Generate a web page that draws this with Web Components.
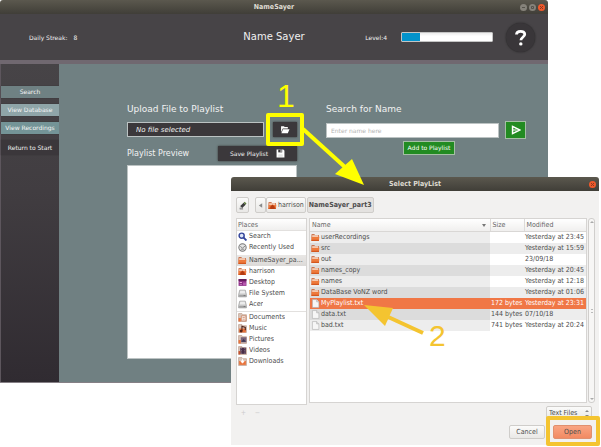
<!DOCTYPE html>
<html lang="en">
<head>
<meta charset="utf-8">
<title>NameSayer</title>
<style>
  html, body { margin: 0; background: #fff; }
  body { position: relative; display: grid; grid-template-columns: 100%; align-items: start;
    min-height: 100vh; font-family: "DejaVu Sans", sans-serif; }
  app-window, file-dialog { grid-area: 1 / 1; }
</style>
</head>
<body>
<app-window></app-window>
<file-dialog></file-dialog>
<guide-notes></guide-notes>

<script>
const define = (name, html, setup) => {
  const tpl = document.createElement('template');
  tpl.innerHTML = html;
  customElements.define(name, class extends HTMLElement {
    constructor() {
      super();
      this.attachShadow({ mode: 'open' }).append(tpl.content.cloneNode(true));
    }
    connectedCallback() { if (setup) setup(this, this.shadowRoot); }
  });
};

const folder = `<path d="M1 2h5l1 1.5h7V14H1z" fill="#c2501f"/><path d="M2 4h11v4H2z" fill="#f8e3d3"/><path d="M1 6.500h14L14 14H1z" fill="#ee7a3c"/><path d="M1 12h13.300l-.3 2H1z" fill="#d4571f"/>`;
const drive = `<path d="M3 2h10l2 8v4H1v-4z" fill="#c9c9c9" stroke="#8d8d8d"/><path d="M4 3h8l1 5H3z" fill="#ececec"/><path d="M2 10.500h12v3H2z" fill="#a2a2a2"/><path d="M10 11.500h3v1h-3z" fill="#555"/>`;
const special = inner => `<path d="M1 1h6l1 2h7v12H1z" fill="#d8c6bb" stroke="#b58f7c"/>${inner}`;
const ICONS = {
  folder,
  home: `${folder}<path d="M4 10l4-4 4 4v4H4z" fill="#b63c12"/>`,
  search: `<circle cx="6.500" cy="6.500" r="4.500" fill="#dfe6f7" stroke="#36479c" stroke-width="2.600"/><path d="M10 10l5 5" stroke="#36479c" stroke-width="3.400"/>`,
  recent: `<circle cx="8" cy="8" r="6.500" fill="#e4e4e4" stroke="#777" stroke-width="1.800"/><path d="M4 6l4 3 5-4M5 11h6" fill="none" stroke="#777" stroke-width="1.500"/>`,
  desktop: `<path d="M1 2h14v12H1z" fill="#8d2f86"/><path d="M1 2h14v3H1z" fill="#5d1d55"/><path d="M3 7h4v2H3zM3 11h4v1H3z" fill="#e7a9d5"/><path d="M9 8h5v5H9z" fill="#b85bb0"/>`,
  drive,
  documents: special('<path d="M6 5h8v9H6z" fill="#f7f1ee" stroke="#c0663c"/><path d="M8 8h4M8 11h4" stroke="#c0663c"/><path d="M1 9h4v6H1z" fill="#e8733b"/>'),
  music: special('<path d="M2 8h12v7H2z" fill="#e8733b"/><path d="M7 13V4l6 2v5" fill="none" stroke="#53261a" stroke-width="2"/><circle cx="5.500" cy="12.500" r="2.500" fill="#53261a"/>'),
  pictures: special('<path d="M5 4h10v9H5z" fill="#746279"/><path d="M6 12l4-5 4 5z" fill="#3c3550"/><path d="M1 9h4v6H1z" fill="#e8733b"/>'),
  videos: special('<path d="M4 3h10v11H4z" fill="#4a2f49"/><path d="M6 4v10M12 4v10" stroke="#c9b7c7" stroke-dasharray="1.500 1.500"/><path d="M1 9h3v6H1z" fill="#c54f2b"/>'),
  downloads: special('<path d="M2 7h12v7H2z" fill="#e8733b"/><path d="M8 3v6M5 7l3 4 3-4z" stroke="#fff" fill="#fff" stroke-width="1.500"/>'),
  file: `<path d="M2.500 1h7.500l4 4v10h-11.500z" fill="#f6f6f6" stroke="#aaa"/><path d="M10 1v4h4" fill="#ddd" stroke="#aaa"/>`,
  pencil: `<path d="M2 14l2-5 4 3z" fill="#c9c9c9"/><path d="M4 9l6-6 3.500 3.500-6 6z" fill="#3c3c3c"/><path d="M10 3l2-1.500 3 3-1.500 2z" fill="#5c7a3a"/><path d="M3 14h6" stroke="#555" stroke-width="1.500"/>`,
  back: `<path d="M11 4v8L5 8z" fill="#8a8a8a"/>`,
  open: `<path d="M1 13V2h5l1.500 1.500H13V6H4z" fill="#fff"/><path d="M4.500 7.500H16l-3 7H1.500z" fill="#fff"/>`,
  save: `<path d="M1 1h12l2 2v12H1z" fill="#fff"/><path d="M4 1h7v5H4z" fill="#3b383b"/><path d="M8 2h2v3H8z" fill="#fff"/><path d="M4 9.500h8V14H4z" fill="#e6e6e6"/>`,
  play: `<path d="M2.500 2.200l11.500 5.800-11.500 5.800z" fill="none" stroke="#fff" stroke-width="2.400"/><path d="M3 8h6" stroke="#fff" stroke-width="1.600"/>`,
  help: `<path d="M4.200 5.200C4.200 1.300 12 1 12 5c0 2.800-3.600 2.700-3.600 5.500" fill="none" stroke="#fff" stroke-width="2.600"/><circle cx="8.300" cy="14" r="1.600" fill="#fff"/>`
};

define('ui-icon', `
  <style>
    :host { display: inline-block; width: 9px; height: 9px; flex: none; vertical-align: middle; }
    svg { display: block; width: 100%; height: 100%; }
  </style>
  <svg viewBox="0 0 16 16" aria-hidden="true"></svg>`,
  (el, root) => { root.querySelector('svg').innerHTML = ICONS[el.getAttribute('name')] || ''; });

define('title-bar', `
  <style>
    :host { display: grid; grid-template-columns: 1fr auto 1fr; align-items: center; height: 14px;
      padding: 0 3px; background: linear-gradient(#5b584e, #403e38); color: #dfdbd2;
      border-radius: 3px 3px 0 0; font: bold 7px/14px "DejaVu Sans Condensed", sans-serif; }
    h1 { grid-column: 2; margin: 0; font: inherit; }
    div { display: flex; gap: 2px; justify-content: flex-end; }
    button { box-sizing: border-box; width: 7px; height: 7px; padding: 0; border: 0; border-radius: 50%;
      background: #85827a; display: grid; place-items: center; }
    button svg { width: 5px; height: 5px; flex: none; fill: none; stroke: #55534c; }
    button.close { background: #f0592b; }
    .close svg { stroke: #8a3a22; }
    :host([closeonly]) .opt { display: none; }
  </style>
  <h1><slot></slot></h1>
  <div>
    <button class="opt" aria-label="Minimise"><svg viewBox="0 0 5 5"><path d="M1 2.500h3"/></svg></button>
    <button class="opt" aria-label="Maximise"><svg viewBox="0 0 5 5"><path d="M1.500 1.500h2v2h-2z"/></svg></button>
    <button class="close" aria-label="Close"><svg viewBox="0 0 5 5"><path d="M1 1l3 3M4 1L1 4"/></svg></button>
  </div>`);

/* Coloured frame that draws attention to the control placed inside it. */
define('mark-box', `
  <style>
    :host { display: inline-flex; position: relative; }
    :host::after { content: ""; position: absolute; inset: var(--mark-inset, -9px -7px);
      border: 4px solid var(--mark, #ff0); border-radius: 2px; pointer-events: none; }
  </style>
  <slot></slot>`);

define('app-header', `
  <style>
    :host { display: grid; grid-template-columns: 1fr auto 1fr; align-items: center; height: 46px;
      padding: 0 13px 0 29px; background: #474447; color: #f0f0f0; border-bottom: 4px solid #706870;
      font-size: 6px; }
    .streak { display: flex; gap: 6px; }
    h2 { margin: 0 0 0 -16px; font-size: 10px; line-height: 14px; font-weight: normal; }
    .right { display: flex; align-items: center; justify-content: flex-end; gap: 13px; }
    .level { display: flex; align-items: center; gap: 14px; }
    progress { appearance: none; width: 92px; height: 10px; border: 1px solid #c4c4c4; border-radius: 1px;
      box-sizing: border-box; background: #fff; }
    progress::-webkit-progress-bar { background: linear-gradient(#ececec, #fff 40%); }
    progress::-webkit-progress-value { background: #0393cb; }
    button { width: 29px; height: 29px; padding: 0; border: 0; border-radius: 50%; background: #393639;
      box-shadow: 0 0 2px #222; display: grid; place-items: center; }
    ui-icon { width: 17px; height: 17px; }
  </style>
  <div class="streak"><span>Daily Streak:</span><span>8</span></div>
  <h2>Name Sayer</h2>
  <div class="right">
    <label class="level">Level:4 <progress max="100" value="20"></progress></label>
    <button aria-label="Help"><ui-icon name="help"></ui-icon></button>
  </div>`);

define('side-nav', `
  <style>
    :host { display: block; background: linear-gradient(#474447, #413d41 40%, #302b31); border-left: 1px solid #5d565d; }
    nav { display: flex; flex-direction: column; gap: 6px; padding-top: 22px; }
    button { width: 100%; height: 12px; padding: 0; border: 0; color: #f4f4f4; font: 6px/12px "DejaVu Sans", sans-serif;
      background: #6f8183; box-shadow: 0 0 1px #333; }
    .db { background: #8fa5a8; } .rec { background: #749497; }
    .home { height: 15px; line-height: 15px; background: #3b373b; }
  </style>
  <nav>
    <button>Search</button>
    <button class="db">View Database</button>
    <button class="rec">View Recordings</button>
    <button class="home">Return to Start</button>
  </nav>`);

define('playlist-form', `
  <style>
    :host { display: grid; grid-template-columns: 17fr 20fr; gap: 29px; padding: 38px 22px 23px 68px;
      background: #708082; color: #f2f2f2; }
    section { display: flex; flex-direction: column; min-width: 0; }
    h3, .caption { margin: 0 0 6px; font-size: 9px; line-height: 14px; font-weight: normal; }
    .caption { margin: 0; font-size: 8px; }
    .row { display: flex; align-items: center; justify-content: space-between; gap: 6px; }
    input, textarea, button { box-sizing: border-box; margin: 0; font-family: inherit; }
    input { flex: 1; min-width: 0; height: 15px; border: 1px solid #bcc3c3; padding: 0 4px; font-size: 6px; background: #fff; }
    input::placeholder { color: #b4b4b4; opacity: 1; }
    .path { flex: 1; height: 15px; background: #3b383b; color: #f2f2f2; font-size: 7px; font-style: italic; padding: 0 8px; }
    .file { gap: 9px; margin-bottom: 9px; }
    .dark { height: 15px; border: 0; padding: 0 12px; background: #3b383b; color: #f2f2f2; font-size: 6px;
      box-shadow: 0 0 2px #333; display: flex; align-items: center; justify-content: center; gap: 8px; }
    .open { width: 24px; padding: 0; }
    .open ui-icon { width: 10px; }
    textarea { height: 194px; margin-top: 4px; border: 1px solid #bcc3c3; background: #fff; resize: none; }
    .find { height: 18px; margin: -1px 0 2px; }
    .go, .add { background: #228b22; border: 1px solid #a5bfa5; color: #fff; padding: 0; }
    .go { width: 21px; height: 18px; display: grid; place-items: center; }
    .go ui-icon { width: 10px; height: 10px; }
    .add { align-self: center; height: 14px; padding: 0 4px; font-size: 6px; line-height: 12px; margin-left: 6px; }
  </style>
  <section>
    <h3><label for="path">Upload File to Playlist</label></h3>
    <div class="row file">
      <input id="path" class="path" readonly value="No file selected">
      <mark-box><button class="dark open" aria-label="Choose file"><ui-icon name="open"></ui-icon></button></mark-box>
    </div>
    <div class="row">
      <label class="caption" for="preview">Playlist Preview</label>
      <button class="dark">Save Playlist <ui-icon name="save"></ui-icon></button>
    </div>
    <textarea id="preview" readonly></textarea>
  </section>
  <section>
    <h3><label for="name">Search for Name</label></h3>
    <div class="row find">
      <input id="name" placeholder="Enter name here">
      <button class="go" aria-label="Play"><ui-icon name="play"></ui-icon></button>
    </div>
    <button class="add">Add to Playlist</button>
  </section>`);

define('app-window', `
  <style>
    :host { display: block; margin-right: 53px; }
    main { display: grid; grid-template-columns: 59px 1fr; border-bottom: 1px solid #857f85; }
    side-nav { min-width: 0; }
  </style>
  <title-bar>NameSayer</title-bar>
  <app-header></app-header>
  <main><side-nav></side-nav><playlist-form></playlist-form></main>`);

define('place-item', `
  <style>
    :host { display: block; }
    button { display: flex; align-items: center; gap: 2px; width: 100%; height: 11px; padding: 0 1px; border: 0;
      background: none; color: #4c4c4c; font: inherit; text-align: left; }
    span { overflow: hidden; white-space: nowrap; text-overflow: ellipsis; }
    :host([current]) button { background: linear-gradient(#e9e7e5, #dcdad8); }
  </style>
  <button><ui-icon></ui-icon><span><slot></slot></span></button>`,
  (el, root) => root.querySelector('ui-icon').replaceWith(
    Object.assign(document.createElement('template'), { innerHTML: `<ui-icon name="${el.getAttribute('icon')}"></ui-icon>` }).content));

const FILES = [
  ['folder', 'userRecordings', '', 'Yesterday at 23:45'],
  ['folder', 'src', '', 'Yesterday at 15:59'],
  ['folder', 'out', '', '23/09/18'],
  ['folder', 'names_copy', '', 'Yesterday at 20:45'],
  ['folder', 'names', '', 'Yesterday at 12:18'],
  ['folder', 'DataBase VoNZ word', '', 'Yesterday at 01:06'],
  ['file', 'MyPlaylist.txt', '172 bytes', 'Yesterday at 23:31'],
  ['file', 'data.txt', '144 bytes', '07/10/18'],
  ['file', 'bad.txt', '741 bytes', 'Yesterday at 20:24']
];

define('file-table', `
  <style>
    :host { display: grid; grid-template-columns: 1fr 8px; }
    .pane { background: #fff; border: 1px solid #d6d4d2; min-width: 0; }
    table { width: 100%; border-collapse: collapse; table-layout: fixed; }
    col.size { width: 34px; } col.date { width: 62px; }
    th, td { height: 11px; padding: 0 1px; line-height: 11px; text-align: left; font-weight: normal; white-space: nowrap; }
    th { height: 12px; padding: 0 2px; line-height: 12px; background: linear-gradient(#fff, #f0efee); border-bottom: 1px solid #d9d7d5; color: #666; }
    th + th { border-left: 1px solid #dddbd9; }
    th i { float: right; margin: 5px 2px 0 0; border: 2px solid transparent; border-top: 3px solid #777; border-bottom: 0; }
    tbody tr { background: #fff; }
    tbody tr td:first-child { background: #ededed; }
    tbody tr:nth-child(even) { background: #ededed; }
    tbody tr:nth-child(even) td:first-child { background: #dcdcdc; }
    tbody tr[aria-selected] td, tbody tr[aria-selected] td:first-child { background: #f07746; color: #fff; }
    ui-icon { margin-right: 1px; vertical-align: top; margin-top: 1px; }
    .scroll { display: flex; flex-direction: column; align-items: center; justify-content: space-between; width: 7px;
      box-sizing: border-box; border: 1px solid #d0cecc; border-radius: 3px; background: #f7f6f5; margin-left: 1px; }
    .scroll span { border: 2px solid transparent; margin: 2px 0; }
    .scroll .up { border-bottom-color: #aaa; border-top: 0; }
    .scroll .down { border-top-color: #aaa; border-bottom: 0; }
    .scroll .grip { width: 2px; height: 2px; border-width: 1px 0; border-color: #bbb; }
  </style>
  <div class="pane">
    <table>
      <colgroup><col><col class="size"><col class="date"></colgroup>
      <thead><tr><th>Name<i></i></th><th>Size</th><th>Modified</th></tr></thead>
      <tbody></tbody>
    </table>
  </div>
  <div class="scroll"><span class="up"></span><span class="grip"></span><span class="down"></span></div>`,
  (el, root) => {
    root.querySelector('tbody').innerHTML = FILES.map(([icon, name, size, date]) =>
      `<tr${name === 'MyPlaylist.txt' ? ' aria-selected="true"' : ''}><td><ui-icon name="${icon}"></ui-icon>${name}</td><td>${size}</td><td>${date}</td></tr>`).join('');
  });

define('file-dialog', `
  <style>
    :host { display: block; position: relative; margin: 177px 2px 2px 231px; color: #4c4c4c;
      background: #f2f1f0; border-radius: 3px 3px 0 0; font: 7px/11px "DejaVu Sans Condensed", sans-serif; }
    button, select { box-sizing: border-box; margin: 0; font: inherit; color: inherit; border: 1px solid #cfcdca;
      border-radius: 2px; background: linear-gradient(#fbfbfa, #e9e8e6); }
    .crumbs { display: flex; padding: 6px 5px 5px; }
    .crumbs button { height: 16px; padding: 0 1px; display: flex; align-items: center; gap: 1px; }
    .crumbs .edit, .crumbs .back { width: 13px; justify-content: center; padding: 0; }
    .crumbs .edit { margin-right: 6px; }
    .crumbs .back { width: 11px; }
    .crumbs .here { font-weight: bold; background: #e4e2e0; margin-left: 1px; padding: 0 1px; }
    .panes { display: grid; grid-template-columns: 71px 1fr; gap: 2px; padding: 0 4px 0 5px; }
    .places { height: 187px; box-sizing: border-box; background: #fff; border: 1px solid #d6d4d2; }
    h2 { margin: 0; padding: 0 1px; height: 11px; font: inherit; line-height: 12px; color: #666;
      background: linear-gradient(#fff, #f0efee); border-bottom: 1px solid #e2e0de; }
    [current] { margin-top: 2px; }
    hr { margin: 1px 0 0; border: 0; border-top: 1px solid #e2e0de; }
    file-table { height: 185px; }
    .tools { display: flex; align-items: center; justify-content: space-between; padding: 1px 7px 0 8px; }
    .tools div { display: flex; gap: 5px; }
    .tools div button { width: 9px; height: 9px; padding: 0; border: 0; background: none; color: #ccc; line-height: 9px; }
    select { appearance: none; width: 46px; height: 14px; padding: 0 2px; }
    label { position: relative; display: flex; }
    label svg { position: absolute; right: 3px; top: 4px; width: 4px; height: 7px; fill: #888; pointer-events: none; }
    .actions { display: flex; justify-content: flex-end; gap: 8px; padding: 5px 7px 6px; }
    .actions button { height: 14px; width: 36px; padding: 0; }
    .actions .ok { width: 39px; background: linear-gradient(#f9a583, #f28a62); border-color: #e0906f; }
    mark-box { --mark: #f4c430; --mark-inset: -9px -8px -7px -7px; }
  </style>
  <title-bar closeonly>Select PlayList</title-bar>
  <div class="crumbs">
    <button class="edit" aria-label="Type a file name"><ui-icon name="pencil"></ui-icon></button>
    <button class="back" aria-label="Back"><ui-icon name="back"></ui-icon></button>
    <button><ui-icon name="home"></ui-icon>harrison</button>
    <button class="here">NameSayer_part3</button>
  </div>
  <div class="panes">
    <div class="places">
      <h2>Places</h2>
      <place-item icon="search">Search</place-item>
      <place-item icon="recent">Recently Used</place-item>
      <place-item icon="folder" current>NameSayer_pa...</place-item>
      <place-item icon="home">harrison</place-item>
      <place-item icon="desktop">Desktop</place-item>
      <place-item icon="drive">File System</place-item>
      <place-item icon="drive">Acer</place-item>
      <hr>
      <place-item icon="documents">Documents</place-item>
      <place-item icon="music">Music</place-item>
      <place-item icon="pictures">Pictures</place-item>
      <place-item icon="videos">Videos</place-item>
      <place-item icon="downloads">Downloads</place-item>
    </div>
    <file-table></file-table>
  </div>
  <div class="tools">
    <div><button aria-label="Add bookmark">+</button><button aria-label="Remove bookmark">−</button></div>
    <label><select aria-label="File type"><option>Text Files</option></select>
      <svg viewBox="0 0 4 7"><path d="M0 2l2-2 2 2zM0 5l2 2 2-2z"/></svg></label>
  </div>
  <div class="actions">
    <button>Cancel</button>
    <mark-box><button class="ok">Open</button></mark-box>
  </div>`);

/* Numbered steps with arrows, drawn over both windows. */
define('guide-notes', `
  <style>
    :host { position: absolute; left: 0; top: 0; pointer-events: none; }
    svg { display: block; font-family: "Liberation Sans", Arial, sans-serif; }
  </style>
  <svg width="600" height="440" viewBox="0 0 600 440">
    <path d="M303 129L346 168" stroke="#ff0" stroke-width="4"/>
    <path d="M352 159L335 174L364 185z" fill="#ff0"/>
    <text x="277" y="107" font-size="32" fill="#ff0">1</text>
    <path d="M423 333L386 316" stroke="#f4c430" stroke-width="4"/>
    <path d="M393 308L385 326L364 305z" fill="#f4c430"/>
    <text x="429" y="346" font-size="30" fill="#f4c430">2</text>
  </svg>`);
</script>
</body>
</html>
